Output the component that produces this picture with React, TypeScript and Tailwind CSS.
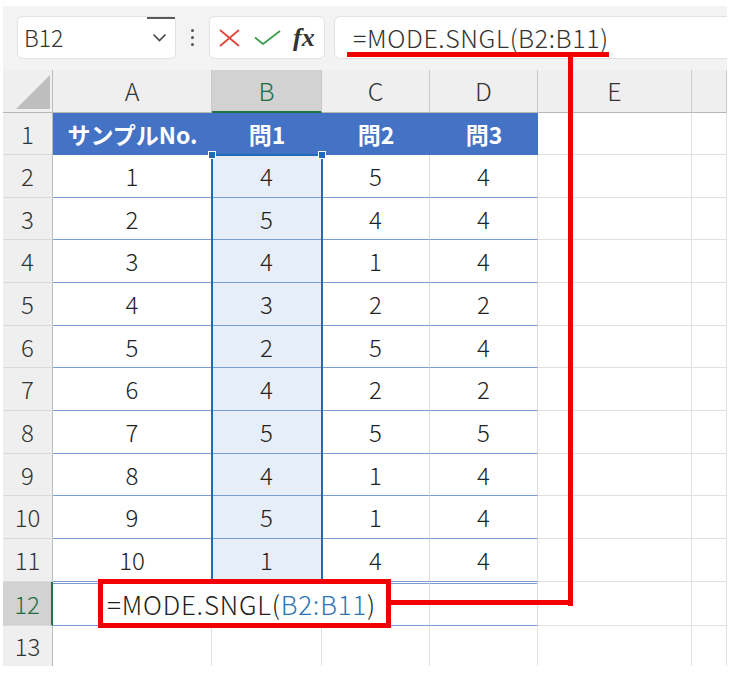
import React from 'react'

const COLS = 'grid grid-cols-[50px_159px_110px_108px_108px_154px_35px]'

const rows: { n: number; h: string; v: (string | number)[] }[] = [
  { n: 1, h: 'h-[42px]', v: ['サンプルNo.', '問1', '問2', '問3'] },
  { n: 2, h: 'h-[43px]', v: [1, 4, 5, 4] },
  { n: 3, h: 'h-[42px]', v: [2, 5, 4, 4] },
  { n: 4, h: 'h-[43px]', v: [3, 4, 1, 4] },
  { n: 5, h: 'h-[43px]', v: [4, 3, 2, 2] },
  { n: 6, h: 'h-[42px]', v: [5, 2, 5, 4] },
  { n: 7, h: 'h-[43px]', v: [6, 4, 2, 2] },
  { n: 8, h: 'h-[43px]', v: [7, 5, 5, 5] },
  { n: 9, h: 'h-[42px]', v: [8, 4, 1, 4] },
  { n: 10, h: 'h-[43px]', v: [9, 5, 1, 4] },
  { n: 11, h: 'h-[43px]', v: [10, 1, 4, 4] },
]

const rowHead =
  'flex items-center justify-center bg-[#efefef] border-r border-b border-r-[#bdbdbd] border-b-[#d9d9d9] text-[24px] font-light text-[#333]'
const plain = 'bg-white border-r border-b border-[#e1e1e1]'

function DataRow({ n, h, v }: { n: number; h: string; v: (string | number)[] }) {
  const isHead = n === 1
  return (
    <div className={`${COLS} ${h}`}>
      <div className={rowHead}>{n}</div>
      {v.map((val, i) =>
        isHead ? (
          <div
            key={i}
            className="flex items-center justify-center bg-[#4472c4] text-white font-bold text-[23px]"
          >
            {val}
          </div>
        ) : (
          <div
            key={i}
            className={`flex items-center justify-center border-r border-b border-r-[#dcdcdc] border-b-[#7a9bd3] text-[24px] font-light text-[#222] ${
              i === 1 ? 'bg-[#e5eef9]' : 'bg-white'
            }`}
          >
            {val}
          </div>
        )
      )}
      <div className={plain} />
      <div className={plain} />
    </div>
  )
}

export default function App() {
  return (
    <div className="relative w-[733px] h-[676px] bg-white overflow-hidden font-['Noto_Sans_CJK_JP','Noto_Sans',sans-serif]">
      <div className="ml-[3px] pt-[6px] w-[724px]">
        {/* formula bar */}
        <div className="h-[64px] bg-[#f3f3f3] flex items-start pt-[10px] pl-[14px]">
          <div className="relative w-[159px] h-[43px] rounded-[6px] border border-[#e2e2e2] bg-white flex items-center justify-between pl-[6px] pr-[8px]">
            <span className="text-[23px] font-light text-[#333]">B12</span>
            <svg width="15" height="9" viewBox="0 0 15 9">
              <path d="M1.5 1.5 L7.5 7.5 L13.5 1.5" fill="none" stroke="#444" strokeWidth="1.6" />
            </svg>
            <div className="absolute right-0 top-0 w-[28px] h-[2px] bg-[#5a5a5a]" />
          </div>
          <div className="w-[33px] h-[43px] flex flex-col items-center justify-center gap-[4px]">
            <div className="w-[3px] h-[3px] rounded-full bg-[#555]" />
            <div className="w-[3px] h-[3px] rounded-full bg-[#555]" />
            <div className="w-[3px] h-[3px] rounded-full bg-[#555]" />
          </div>
          <div className="w-[116px] h-[43px] rounded-[6px] border border-[#e2e2e2] bg-white flex items-center pl-[9px]">
            <svg width="21" height="18" viewBox="0 0 21 18">
              <path d="M1 1 L20 17 M20 1 L1 17" stroke="#e0453a" strokeWidth="1.8" />
            </svg>
            <svg width="27" height="15" viewBox="0 0 27 15" className="ml-[14px]">
              <path d="M1 7.5 L9 14 L26 1" fill="none" stroke="#3c9f4d" strokeWidth="1.8" />
            </svg>
            <span className="ml-[12px] text-[26px] italic font-bold text-[#333] font-['Liberation_Serif',serif] leading-none">
              fx
            </span>
          </div>
          <div className="ml-[9px] flex-1 h-[43px] rounded-l-[6px] border border-r-0 border-[#e2e2e2] bg-white flex items-center pl-[18px]">
            <span className="text-[25px] font-light tracking-[0.6px] text-[#333]">=MODE.SNGL(B2:B11)</span>
          </div>
        </div>

        {/* sheet */}
        <div className={`${COLS} h-[43px]`}>
          <div className="bg-[#efefef] border-r border-b border-r-[#bdbdbd] border-b-[#b7b7b7]">
            <svg width="49" height="42" viewBox="0 0 49 42">
              <polygon points="47,5 47,39 13,39" fill="#bebebe" />
            </svg>
          </div>
          {['A', 'B', 'C', 'D', 'E', ''].map((c) =>
            c === 'B' ? (
              <div
                key={c}
                className="flex items-center justify-center bg-[#d2d2d2] border-r border-r-[#c9c9c9] border-b-2 border-b-[#217346] text-[25px] font-light text-[#1e6e42]"
              >
                {c}
              </div>
            ) : (
              <div
                key={c || 'F'}
                className="flex items-center justify-center bg-[#efefef] border-r border-b border-r-[#c9c9c9] border-b-[#b7b7b7] text-[25px] font-light text-[#333]"
              >
                {c}
              </div>
            )
          )}
        </div>

        {rows.map((r) => (
          <DataRow key={r.n} {...r} />
        ))}

        <div className={`${COLS} h-[44px]`}>
          <div className="flex items-center justify-center bg-[#d2d2d2] border-r-2 border-b border-r-[#217346] border-b-[#d9d9d9] text-[24px] font-light text-[#1e6e42]">
            12
          </div>
          {[0, 1, 2, 3].map((i) => (
            <div
              key={i}
              className="bg-white border-r border-b border-r-[#dcdcdc] border-b-[#7a9bd3] shadow-[inset_0_1px_0_#fff,inset_0_2px_0_#7a9bd3]"
            />
          ))}
          <div className={plain} />
          <div className={plain} />
        </div>

        <div className={`${COLS} h-[40px]`}>
          <div className="flex items-center justify-center bg-[#efefef] border-r border-r-[#bdbdbd] text-[24px] font-light text-[#333]">
            13
          </div>
          {[0, 1, 2, 3, 4, 5].map((i) => (
            <div key={i} className="bg-white border-r border-[#e1e1e1]" />
          ))}
        </div>
      </div>

      {/* range reference highlight on B2:B11 */}
      <div className="absolute left-[211px] top-[154px] w-[112px] h-[428px] border-2 border-[#1f6bb5]" />
      <div className="absolute left-[208px] top-[151px] w-[8px] h-[8px] bg-[#1f6bb5] border border-white" />
      <div className="absolute left-[318px] top-[151px] w-[8px] h-[8px] bg-[#1f6bb5] border border-white" />

      {/* red annotation */}
      <div className="absolute left-[347px] top-[52px] w-[262px] h-[5px] bg-[#f20000]" />
      <div className="absolute left-[568px] top-[52px] w-[5px] h-[554px] bg-[#f20000]" />
      <div className="absolute left-[390px] top-[600px] w-[183px] h-[5px] bg-[#f20000]" />
      <div className="absolute left-[98px] top-[579px] w-[293px] h-[49px] border-[5px] border-[#f20000] bg-white flex items-center pl-[4px]">
        <span className="text-[26px] font-light tracking-[0.8px] text-[#222] whitespace-nowrap">
          =MODE.SNGL(<span className="text-[#2e75b6]">B2:B11</span>)
        </span>
      </div>
    </div>
  )
}
